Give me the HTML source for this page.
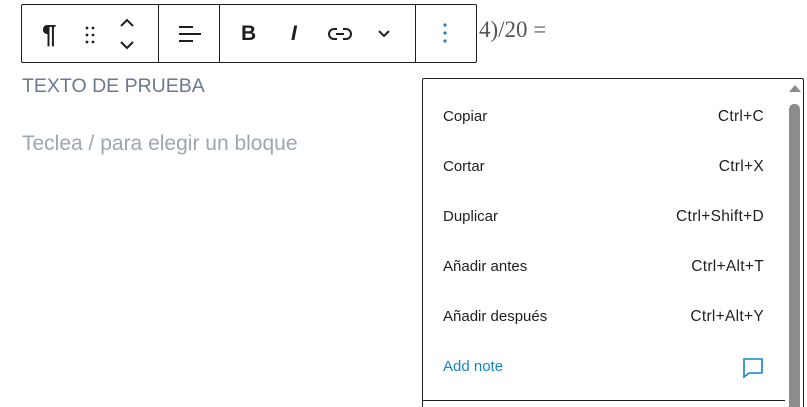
<!DOCTYPE html>
<html style="height:407px;overflow:hidden"><head><style>
body{margin:0;width:807px;height:407px;background:#fff;position:relative;overflow:hidden;font-family:"Liberation Sans",sans-serif}
.tb{position:absolute;left:21px;top:4px;width:454px;height:57px;border:1px solid #1e1e1e;border-radius:2px;box-sizing:content-box}
.div{position:absolute;top:0;width:1px;height:57px;background:#1e1e1e}
.ic{position:absolute}
.menu{position:absolute;left:422px;top:78px;width:380px;height:329px;border:1px solid #1e1e1e;border-bottom:none;border-radius:2px;overflow:hidden}
.row{position:absolute;left:20px;width:321px;font-size:15px;color:#1e1e1e;display:flex;justify-content:space-between;line-height:20px}
.row span:last-child{font-size:15.5px;letter-spacing:0.3px}
</style></head><body>
<div class="tb">
 <div class="div" style="left:136px"></div>
 <div class="div" style="left:197px"></div>
 <div class="div" style="left:393px"></div>
 <div class="ic" style="left:20px;top:14px;font-size:26px;font-weight:bold;color:#1e1e1e">¶</div>
 <svg class="ic" style="left:62px;top:20px" width="14" height="22"><g fill="#1e1e1e"><circle cx="3" cy="3" r="1.4"/><circle cx="9" cy="3" r="1.4"/><circle cx="3" cy="10" r="1.4"/><circle cx="9" cy="10" r="1.4"/><circle cx="3" cy="17" r="1.4"/><circle cx="9" cy="17" r="1.4"/></g></svg>
 <svg class="ic" style="left:96px;top:12px" width="18" height="34" fill="none" stroke="#1e1e1e" stroke-width="2"><path d="M3 9l6-6 6 6M3 25l6 6 6-6"/></svg>
 <svg class="ic" style="left:155px;top:20px" width="24" height="20" stroke="#1e1e1e" stroke-width="2"><path d="M2 2h14M2 9h22M2 16h14"/></svg>
 <div class="ic" style="left:219px;top:17px;font-size:21px;font-weight:bold;color:#1e1e1e">B</div>
 <div class="ic" style="left:269px;top:17px;font-size:21px;font-style:italic;font-weight:bold;color:#1e1e1e">I</div>
 <svg class="ic" style="left:306px;top:21px" width="24" height="16" fill="none" stroke="#1e1e1e" stroke-width="2"><path d="M9 3H6a5 5 0 000 10h3M15 3h3a5 5 0 010 10h-3M8 8h8"/></svg>
 <svg class="ic" style="left:355px;top:24px" width="14" height="10" fill="none" stroke="#1e1e1e" stroke-width="2"><path d="M2 2l5 5 5-5"/></svg>
 <svg class="ic" style="left:420px;top:17px" width="6" height="24" fill="#2a7ec9"><circle cx="3" cy="3" r="1.6"/><circle cx="3" cy="11" r="1.6"/><circle cx="3" cy="19" r="1.6"/></svg>
</div>
<div style="position:absolute;left:479px;top:17px;font-family:'Liberation Serif',serif;font-size:23px;color:#555">4)/20 =</div>
<div style="position:absolute;left:22px;top:75px;font-size:19.5px;color:#6b7a8f">TEXTO DE PRUEBA</div>
<div style="position:absolute;left:22px;top:132px;font-size:21px;color:#9ea6b0">Teclea / para elegir un bloque</div>
<div class="menu">
 <div class="row" style="top:28px"><span>Copiar</span><span>Ctrl+C</span></div>
 <div class="row" style="top:78px"><span>Cortar</span><span>Ctrl+X</span></div>
 <div class="row" style="top:128px"><span>Duplicar</span><span>Ctrl+Shift+D</span></div>
 <div class="row" style="top:178px"><span>Añadir antes</span><span>Ctrl+Alt+T</span></div>
 <div class="row" style="top:228px"><span>Añadir después</span><span>Ctrl+Alt+Y</span></div>
 <div class="row" style="top:278px;color:#1585c8"><span style="font-size:15px;letter-spacing:0">Add note</span>
  <svg width="22" height="22" fill="none" stroke="#1585c8" stroke-width="1.6"><path d="M2 2h18v14H7l-5 4z"/></svg></div>
 <div style="position:absolute;left:0;top:321px;width:362px;height:1px;background:#1e1e1e"></div>
 <div style="position:absolute;left:366px;top:25px;width:11px;height:320px;border-radius:5px;background:#8c8c8c"></div>
 <div style="position:absolute;left:366px;top:6px;width:0;height:0;border-left:6px solid transparent;border-right:6px solid transparent;border-bottom:7px solid #8c8c8c"></div>
</div>
</body></html>
